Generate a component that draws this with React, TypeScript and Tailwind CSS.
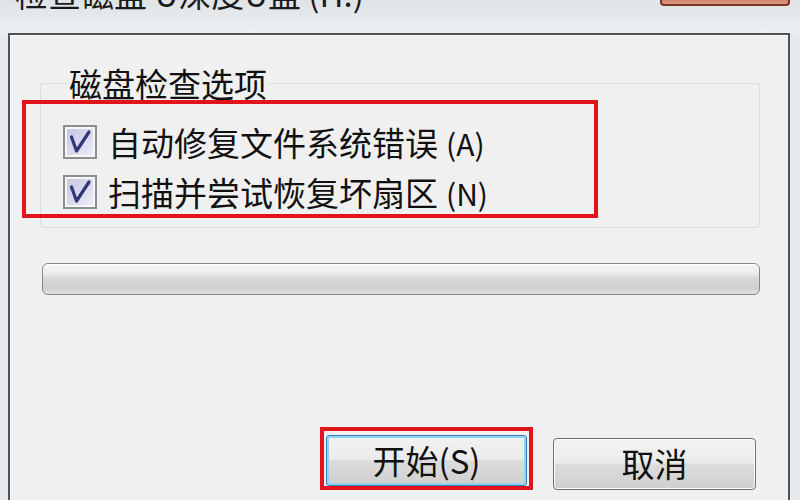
import React from "react";

const CJK = "font-['Noto_Sans_CJK_SC','Noto_Sans',sans-serif]";

// checkbox in the win7 style, always ticked here
const CheckBox = () => (
    <div className="w-[34px] h-[34px] shrink-0 border-2 border-[#8c8e90] bg-[#f6f6f6] p-[2px]">
        <div className="w-full h-full bg-[linear-gradient(135deg,#c6c7e2_0%,#d8d8ee_50%,#ececf8_100%)] relative">
            <svg viewBox="0 0 26 26" className="absolute inset-0 w-full h-full">
                <path d="M4.5 8 L9.5 22 L22 3" fill="none" stroke="#2f3874" strokeWidth="3.2" strokeLinecap="round" strokeLinejoin="round" />
            </svg>
        </div>
    </div>
);

const Option = ({ label, hotkey }: { label: string; hotkey: string }) => (
    <div className="flex items-center h-[40px]">
        <CheckBox />
        <span className="ml-[11px] text-[33px] leading-[40px] text-[#111] whitespace-nowrap">
            {label}
            <span className="ml-[8px] text-[30px]">({hotkey})</span>
        </span>
    </div>
);

const App = () => {
    return (
        <div className={`w-[800px] h-[500px] overflow-hidden relative bg-[#e6eaee] flex flex-col ${CJK}`}>
            {/* glass smudge over the title bar */}
            <div className="absolute left-[130px] top-[0px] w-[220px] h-[40px] rounded-full bg-[#7d7d7d] opacity-40 blur-xl" />

            {/* title bar, mostly cut off at the top */}
            <div className="relative h-[33px] flex justify-between items-start overflow-hidden bg-[linear-gradient(to_bottom,#dfe3e6,#eef0f2)]">
                <div className="-mt-[27px] ml-[15px] text-[33px] leading-[40px] text-[#1a1a1a] whitespace-nowrap">
                    检查磁盘 U深度U盘 (H:)
                </div>
                <div className="w-[130px] h-[8px] mr-[10px] -mt-[2px] rounded-b-[4px] border-2 border-t-0 border-[#7a3626] bg-[linear-gradient(to_bottom,#c9735b,#e09a84)]" />
            </div>

            {/* client area */}
            <div className="relative flex-1 ml-[8px] mr-[10px] border-l-2 border-t-2 border-r-2 border-[#4f5256] bg-[#f0f0f0] flex flex-col">
                <div className="flex-1 border-l border-t border-white flex flex-col">
                    {/* group box */}
                    <div className="mt-[47px] ml-[29px] w-[720px] h-[145px] border border-[#d5dfe5] rounded-[3px] flex flex-col">
                        <div className="-mt-[20px] ml-[26px] w-fit px-[2px] bg-[#f0f0f0] text-[33px] leading-[38px] text-[#111]">
                            磁盘检查选项
                        </div>
                        <div className="-mt-[2px] -ml-[19px] w-[576px] h-[118px] border-4 border-[#e1141c] pl-[37px] pt-[18px] flex flex-col gap-[10px]">
                            <Option label="自动修复文件系统错误" hotkey="A" />
                            <Option label="扫描并尝试恢复坏扇区" hotkey="N" />
                        </div>
                    </div>

                    {/* progress bar */}
                    <div className="mt-[35px] ml-[31px] w-[718px] h-[32px] rounded-[6px] border border-[#85888b] bg-[linear-gradient(to_bottom,#f7f7f7_0%,#ececec_30%,#d7d7d7_50%,#d0d0d0_80%,#e2e2e2_100%)] shadow-[inset_0_1px_0_#ffffff]" />

                    {/* buttons */}
                    <div className="mt-auto flex justify-end items-end gap-[20px] pr-[32px] pb-[10px]">
                        <div className="w-[213px] h-[63px] border-4 border-[#e1141c] pt-[4px] px-[2px]">
                            <div className="w-full h-full rounded-[3px] border border-[#3c7fb1] shadow-[inset_0_0_0_2px_#8fd3f3] bg-[linear-gradient(to_bottom,#f2f2f2_0%,#ebebeb_48%,#dddddd_50%,#cfcfcf_100%)] flex items-center justify-center text-[33px] text-[#111]">
                                开始(S)
                            </div>
                        </div>
                        <div className="w-[203px] h-[52px] rounded-[4px] border border-[#707070] shadow-[inset_0_0_0_1px_#fbfbfb] bg-[linear-gradient(to_bottom,#f2f2f2_0%,#ebebeb_48%,#dddddd_50%,#cfcfcf_100%)] flex items-center justify-center text-[33px] text-[#111]">
                            取消
                        </div>
                    </div>
                </div>
            </div>
        </div>
    );
};

export default App;
